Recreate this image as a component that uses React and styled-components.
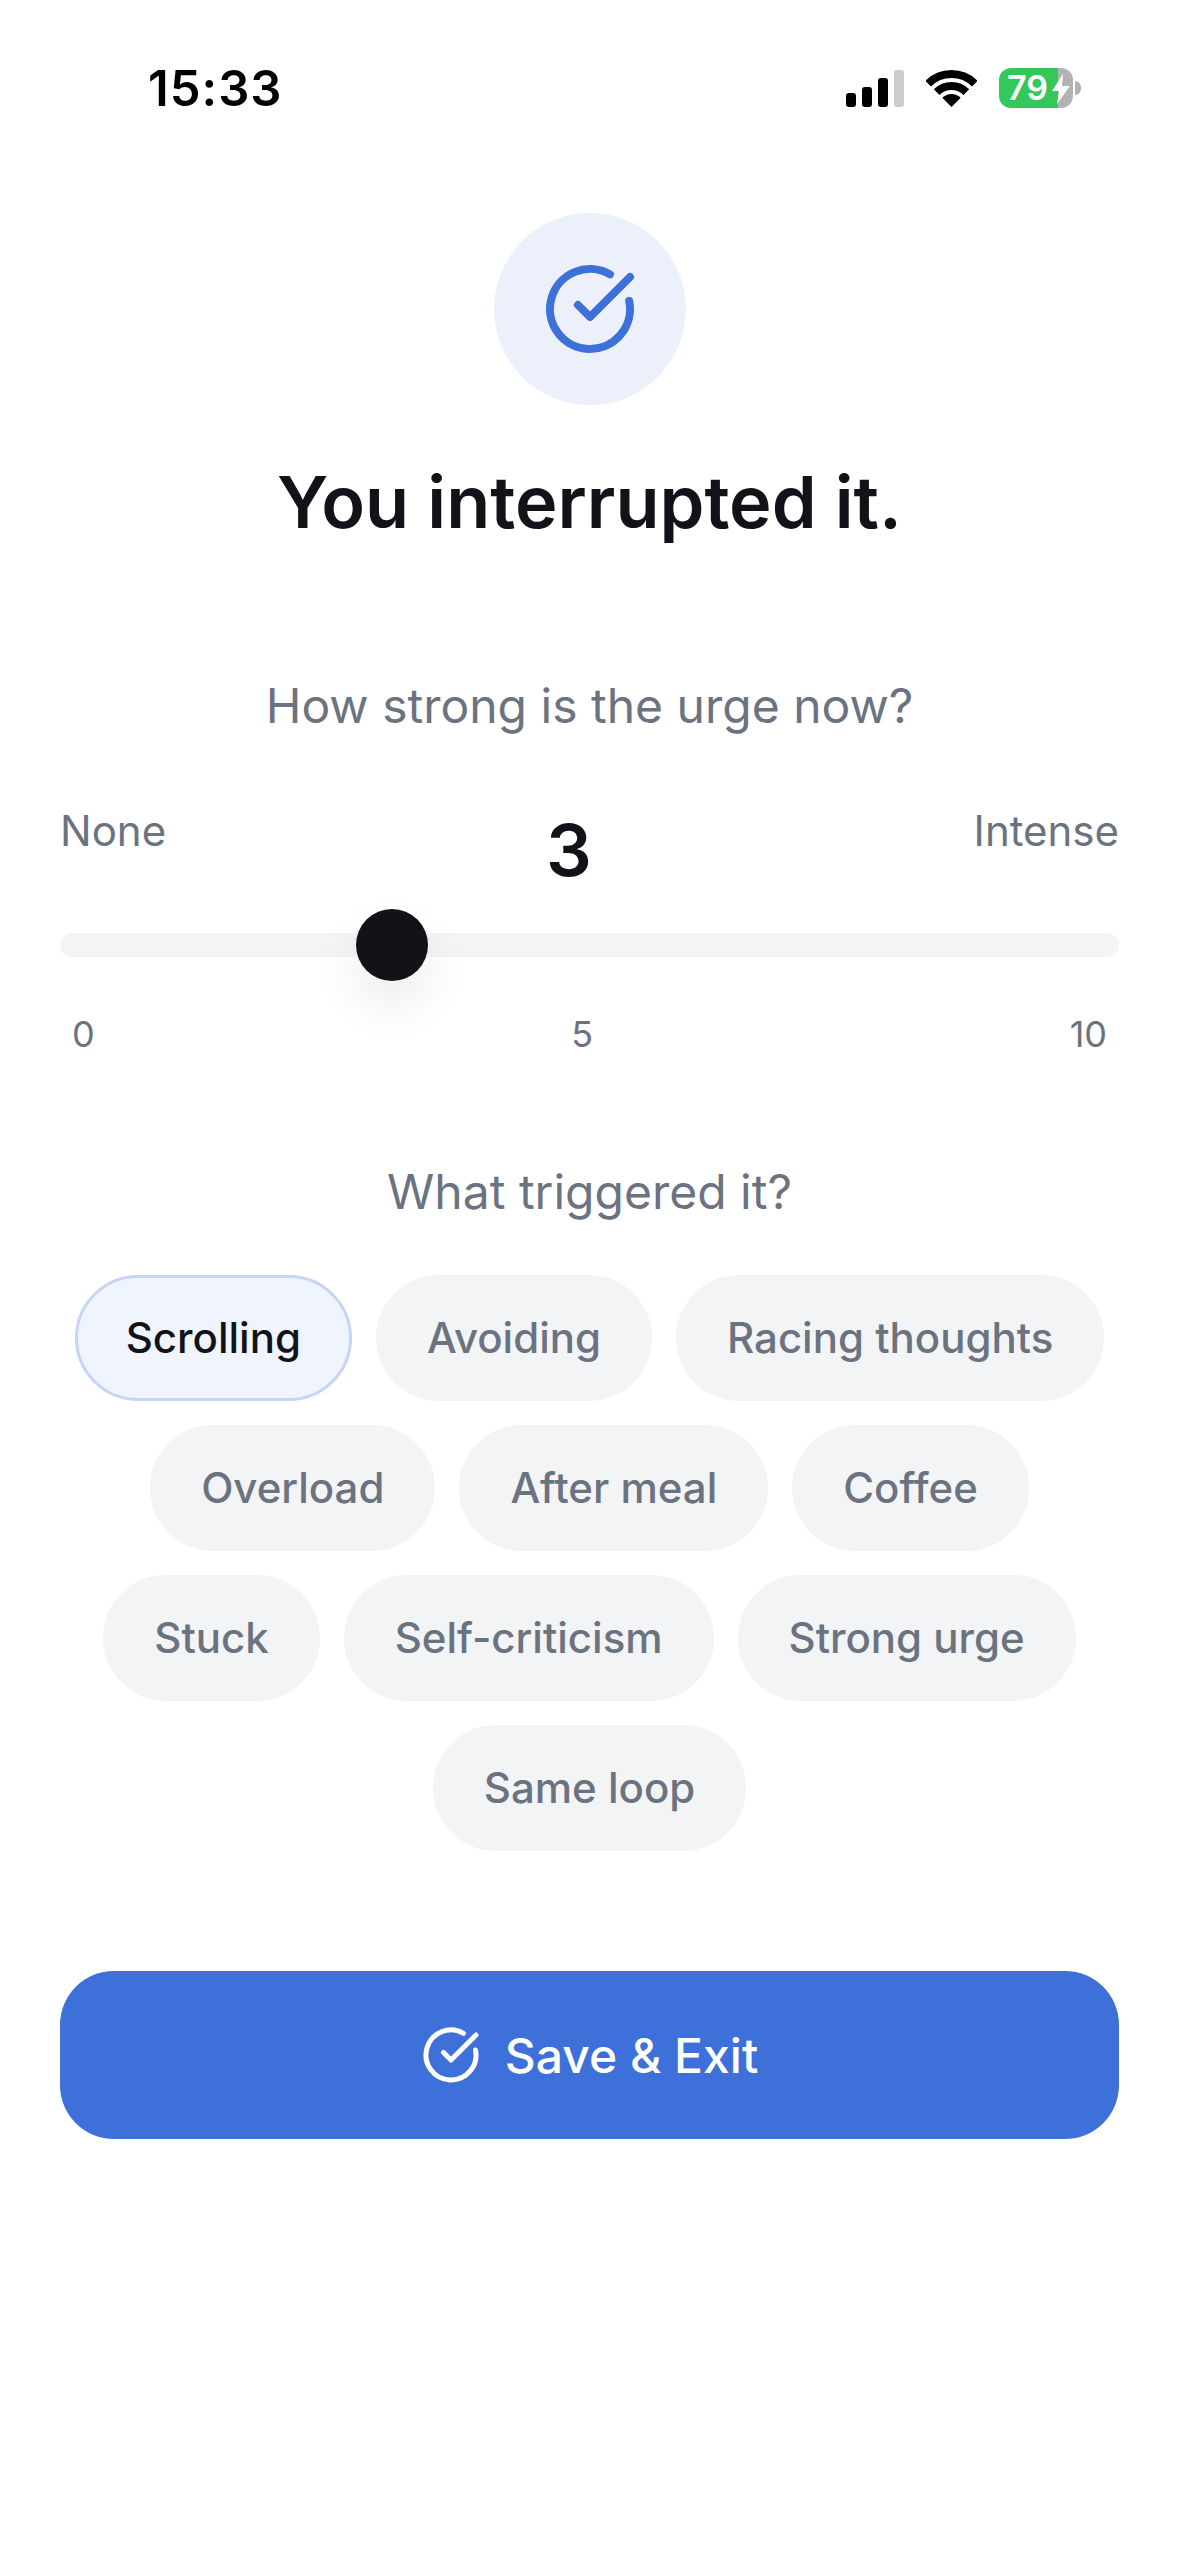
import React from "react";
import styled, { createGlobalStyle } from "styled-components";
import { CircleCheckBig } from "lucide-react";

const GlobalStyle = createGlobalStyle`
  html, body {
    margin: 0;
    padding: 0;
    background: #ffffff;
    font-family: "Inter", "Liberation Sans", sans-serif;
  }
  * { box-sizing: border-box; }
`;

const Page = styled.div`
  width: 1179px;
  height: 2556px;
  overflow: hidden;
  background: #ffffff;
  display: flex;
  flex-direction: column;
`;

const StatusBar = styled.div`
  height: 174px;
  flex: none;
  display: flex;
  align-items: center;
  justify-content: space-between;
  padding: 2px 98px 0 148px;
`;

const Time = styled.div`
  font-size: 49px;
  font-weight: 600;
  color: #000000;
  letter-spacing: 1px;
`;

const StatusIcons = styled.div`
  display: flex;
  align-items: center;
  gap: 22px;
`;

const Signal = styled.div`
  display: flex;
  align-items: flex-end;
  gap: 6px;
  height: 37px;
`;

const SignalBar = styled.div`
  width: 10px;
  height: ${(p) => p.$h}px;
  border-radius: 3px;
  background: ${(p) => (p.$off ? "#cccccc" : "#000000")};
`;

const Battery = styled.div`
  position: relative;
  width: 74px;
  height: 40px;
  border-radius: 12px;
  background: linear-gradient(90deg, #34c759 0 59px, #b2b2b2 59px);
  color: #ffffff;
  font-size: 34px;
  font-weight: 600;
  line-height: 40px;
  padding-left: 8px;
  margin-right: 8px;
`;

const BatteryBolt = styled.svg`
  position: absolute;
  left: 53px;
  top: 6px;
`;

const BatteryNub = styled.div`
  position: absolute;
  right: -8px;
  top: 13px;
  width: 6px;
  height: 14px;
  border-radius: 0 7px 7px 0;
  background: #b2b2b2;
`;

const Content = styled.div`
  display: flex;
  flex-direction: column;
  padding: 39px 60px 0;
`;

const IconCircle = styled.div`
  width: 192px;
  height: 192px;
  border-radius: 50%;
  background: #ebf0fa;
  color: #3d70d8;
  align-self: center;
  display: flex;
  align-items: center;
  justify-content: center;
`;

const Heading = styled.h1`
  margin: 53px 0 0;
  font-size: 72px;
  line-height: 88px;
  font-weight: 600;
  color: #111318;
  text-align: center;
`;

const Question = styled.div`
  font-size: 48px;
  line-height: 60px;
  color: #6b7280;
  text-align: center;
  margin-top: ${(p) => p.$top}px;
`;

const ScaleLabels = styled.div`
  display: flex;
  justify-content: space-between;
  align-items: flex-start;
  margin-top: 68px;
  height: 99px;
`;

const ScaleLabel = styled.div`
  font-size: 42px;
  line-height: 54px;
  color: #6b7280;
`;

const ScaleValue = styled.div`
  font-size: 72px;
  line-height: 88px;
  font-weight: 600;
  color: #111318;
  margin-top: 2px;
  margin-right: 2px;
`;

const Track = styled.div`
  position: relative;
  height: 24px;
  border-radius: 12px;
  background: #f3f4f6;
  margin-top: 30px;
`;

const Thumb = styled.div`
  position: absolute;
  left: 296px;
  top: -24px;
  width: 72px;
  height: 72px;
  border-radius: 50%;
  background: #111318;
  box-shadow: 0 24px 48px rgba(0, 0, 0, 0.08);
`;

const Ticks = styled.div`
  display: flex;
  justify-content: space-between;
  padding: 0 12px;
  margin-top: 55px;
`;

const Tick = styled.div`
  font-size: 36px;
  line-height: 44px;
  color: #6b7280;
`;

const Chips = styled.div`
  display: flex;
  flex-wrap: wrap;
  justify-content: center;
  gap: 24px;
  margin-top: 53px;
`;

const Chip = styled.div`
  height: 126px;
  display: flex;
  align-items: center;
  padding: 0 48px 2px;
  border-radius: 63px;
  font-size: 42px;
  font-weight: 500;
  border: 3px solid ${(p) => (p.$active ? "#c5d5f3" : "#f3f4f6")};
  background: ${(p) => (p.$active ? "#eff4fd" : "#f3f4f6")};
  color: ${(p) => (p.$active ? "#111318" : "#6b7280")};
`;

const SaveButton = styled.button`
  margin-top: 120px;
  height: 168px;
  border: none;
  border-radius: 54px;
  background: #3d70d8;
  color: #ffffff;
  font-family: inherit;
  font-size: 48px;
  font-weight: 500;
  display: flex;
  align-items: center;
  justify-content: center;
  gap: 24px;
`;

const triggers = [
  "Scrolling",
  "Avoiding",
  "Racing thoughts",
  "Overload",
  "After meal",
  "Coffee",
  "Stuck",
  "Self-criticism",
  "Strong urge",
  "Same loop",
];

function WifiIcon() {
  return (
    <svg width="51" height="37" viewBox="0 0 51 37" fill="none">
      <path d="M2.2 13.7A33 33 0 0 1 48.8 13.7" stroke="#000" strokeWidth="8" />
      <path d="M10.65 22.15A21 21 0 0 1 40.35 22.15" stroke="#000" strokeWidth="8" />
      <path d="M25.5 37L16.3 27.8A13 13 0 0 1 34.7 27.8Z" fill="#000" />
    </svg>
  );
}

export default function App() {
  return (
    <Page>
      <GlobalStyle />
      <StatusBar>
        <Time>15:33</Time>
        <StatusIcons>
          <Signal>
            <SignalBar $h={14} />
            <SignalBar $h={20} />
            <SignalBar $h={29} />
            <SignalBar $h={37} $off />
          </Signal>
          <WifiIcon />
          <Battery>
            79
            <BatteryBolt width="18" height="30" viewBox="0 0 18 30">
              <path d="M11 0L0 17H7L5 30L18 12H10Z" fill="#fff" />
            </BatteryBolt>
            <BatteryNub />
          </Battery>
        </StatusIcons>
      </StatusBar>
      <Content>
        <IconCircle>
          <CircleCheckBig size={96} strokeWidth={2} />
        </IconCircle>
        <Heading>You interrupted it.</Heading>
        <Question $top={130}>How strong is the urge now?</Question>
        <ScaleLabels>
          <ScaleLabel>None</ScaleLabel>
          <ScaleValue>3</ScaleValue>
          <ScaleLabel>Intense</ScaleLabel>
        </ScaleLabels>
        <Track>
          <Thumb />
        </Track>
        <Ticks>
          <Tick>0</Tick>
          <Tick>5</Tick>
          <Tick>10</Tick>
        </Ticks>
        <Question $top={106}>What triggered it?</Question>
        <Chips>
          {triggers.map((t, i) => (
            <Chip key={t} $active={i === 0}>
              {t}
            </Chip>
          ))}
        </Chips>
        <SaveButton>
          <CircleCheckBig size={60} strokeWidth={2} />
          Save &amp; Exit
        </SaveButton>
      </Content>
    </Page>
  );
}
